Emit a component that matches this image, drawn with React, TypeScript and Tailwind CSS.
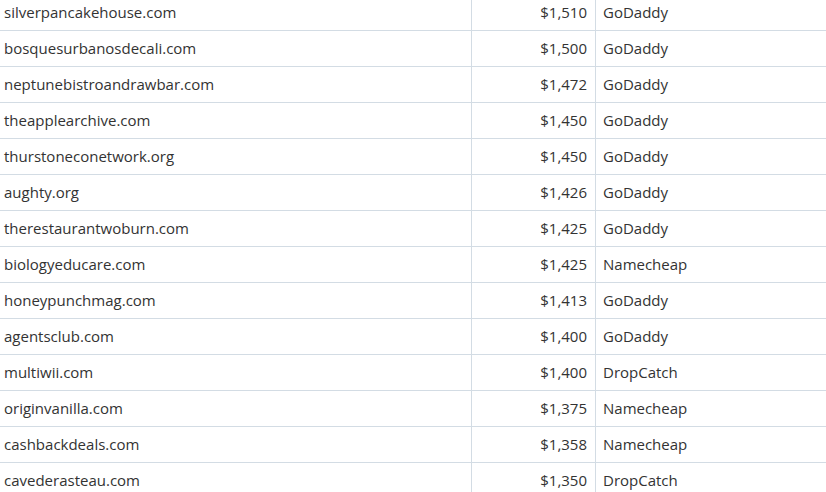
const rows: [string, string, string][] = [
  ["silverpancakehouse.com", "$1,510", "GoDaddy"],
  ["bosquesurbanosdecali.com", "$1,500", "GoDaddy"],
  ["neptunebistroandrawbar.com", "$1,472", "GoDaddy"],
  ["theapplearchive.com", "$1,450", "GoDaddy"],
  ["thurstoneconetwork.org", "$1,450", "GoDaddy"],
  ["aughty.org", "$1,426", "GoDaddy"],
  ["therestaurantwoburn.com", "$1,425", "GoDaddy"],
  ["biologyeducare.com", "$1,425", "Namecheap"],
  ["honeypunchmag.com", "$1,413", "GoDaddy"],
  ["agentsclub.com", "$1,400", "GoDaddy"],
  ["multiwii.com", "$1,400", "DropCatch"],
  ["originvanilla.com", "$1,375", "Namecheap"],
  ["cashbackdeals.com", "$1,358", "Namecheap"],
  ["cavederasteau.com", "$1,350", "DropCatch"],
];

export default function App() {
  return (
    <div className="w-[826px] h-[492px] overflow-hidden bg-white font-['Open_Sans',sans-serif] text-[15px] text-[#333]">
      <div className="-mt-[5px]">
        {rows.map(([domain, price, registrar]) => (
          <div key={domain} className="flex h-[36px] items-center border-b border-[#d3dce4]">
            <div className="flex h-full w-[472px] items-center border-r border-[#d3dce4] pl-[4px]">
              {domain}
            </div>
            <div className="flex h-full w-[124px] items-center justify-end border-r border-[#d3dce4] pr-[8px]">
              {price}
            </div>
            <div className="flex h-full flex-1 items-center pl-[7px]">{registrar}</div>
          </div>
        ))}
      </div>
    </div>
  );
}
